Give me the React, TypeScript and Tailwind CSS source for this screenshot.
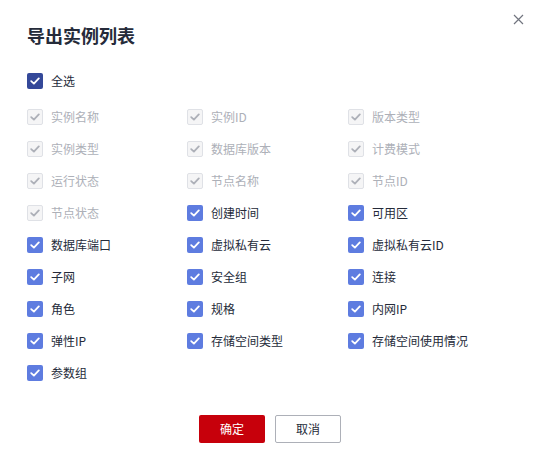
import React from 'react';

type Item = { label: string; disabled?: boolean };

const items: Item[] = [
  { label: '实例名称', disabled: true },
  { label: '实例ID', disabled: true },
  { label: '版本类型', disabled: true },
  { label: '实例类型', disabled: true },
  { label: '数据库版本', disabled: true },
  { label: '计费模式', disabled: true },
  { label: '运行状态', disabled: true },
  { label: '节点名称', disabled: true },
  { label: '节点ID', disabled: true },
  { label: '节点状态', disabled: true },
  { label: '创建时间' },
  { label: '可用区' },
  { label: '数据库端口' },
  { label: '虚拟私有云' },
  { label: '虚拟私有云ID' },
  { label: '子网' },
  { label: '安全组' },
  { label: '连接' },
  { label: '角色' },
  { label: '规格' },
  { label: '内网IP' },
  { label: '弹性IP' },
  { label: '存储空间类型' },
  { label: '存储空间使用情况' },
  { label: '参数组' },
];

const Check = ({ color }: { color: string }) => (
  <svg width="10" height="8" viewBox="0 0 10 8" fill="none">
    <path d="M1.2 4.1 L3.9 6.6 L8.8 1.4" stroke={color} strokeWidth="1.8" strokeLinecap="round" strokeLinejoin="round" />
  </svg>
);

const Box = ({ variant }: { variant: 'all' | 'on' | 'disabled' }) => {
  if (variant === 'disabled') {
    return (
      <span className="flex h-4 w-4 shrink-0 items-center justify-center rounded-[2px] border border-[#dfe1e6] bg-[#f5f5f6]">
        <Check color="#adb0b8" />
      </span>
    );
  }
  return (
    <span
      className={
        variant === 'all'
          ? 'flex h-4 w-4 shrink-0 items-center justify-center rounded-[2px] bg-[#344899]'
          : 'flex h-4 w-4 shrink-0 items-center justify-center rounded-[2px] bg-[#5e7ce0]'
      }
    >
      <Check color="#ffffff" />
    </span>
  );
};

export default function App() {
  return (
    <div
      className="relative h-[460px] w-[538px] bg-white text-[#252b3a]"
      style={{ fontFamily: '"Noto Sans CJK SC", "Noto Sans", sans-serif' }}
    >
      <button className="absolute right-[14px] top-[13px] flex h-[12px] w-[12px] items-center justify-center">
        <svg width="11" height="11" viewBox="0 0 11 11">
          <path d="M1 1 L10 10 M10 1 L1 10" stroke="#71757f" strokeWidth="1.2" />
        </svg>
      </button>

      <div className="px-[27px] pt-[22px]">
        <h2 className="text-[18px] font-bold leading-[26px]">导出实例列表</h2>

        <label className="mt-[23px] flex h-[20px] items-center gap-[8px] text-[12px]">
          <Box variant="all" />
          <span>全选</span>
        </label>

        <div className="mt-[16px] grid grid-cols-[160px_161px_1fr] gap-y-[12px]">
          {items.map((it) => (
            <label key={it.label} className="flex h-[20px] items-center gap-[8px] text-[12px]">
              <Box variant={it.disabled ? 'disabled' : 'on'} />
              <span className={it.disabled ? 'text-[#adb0b8]' : 'text-[#252b3a]'}>{it.label}</span>
            </label>
          ))}
        </div>

        <div className="mt-[32px] flex justify-center gap-[10px] pl-[2px]">
          <button className="h-[28px] w-[66px] rounded-[2px] bg-[#c7000b] text-[12px] text-white">确定</button>
          <button className="h-[28px] w-[66px] rounded-[2px] border border-[#adb0b8] bg-white text-[12px] text-[#252b3a]">取消</button>
        </div>
      </div>
    </div>
  );
}
